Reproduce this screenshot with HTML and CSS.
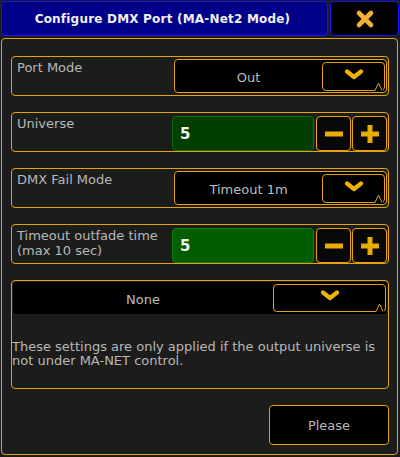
FILE: index.html
```html
<!DOCTYPE html>
<html>
<head>
<meta charset="utf-8">
<link rel="stylesheet" href="styles.css">
</head>
<body>
<div class="header">
  <div class="title">Configure DMX Port (MA-Net2 Mode)</div>
  <div class="close">
    <svg width="20" height="20" viewBox="0 0 20 20"><path d="M4 4 L16 16 M16 4 L4 16" stroke="#f2b230" stroke-width="4.6" stroke-linecap="round"/></svg>
  </div>
</div>
<div class="panel">
  <div class="row">
    <div class="label">Port Mode</div>
    <div class="dropdown">
      <div class="dd-text">Out</div>
      <div class="dd-btn">
        <svg class="chev" width="20" height="11" viewBox="0 0 20 11"><path d="M3 2.5 L10 8 L17 2.5" fill="none" stroke="#f2b200" stroke-width="4.2" stroke-linecap="round" stroke-linejoin="round"/></svg>
        <svg class="notch" width="8" height="9" viewBox="0 0 8 9"><path d="M0 8.5 L3.5 1 L7 8.5" fill="none" stroke="#e6a40a" stroke-width="1"/></svg>
      </div>
    </div>
  </div>
  <div class="row">
    <div class="label">Universe</div>
    <div class="stepper">
      <div class="value dark">5</div>
      <div class="sbtn"><svg width="18" height="18" viewBox="0 0 18 18"><rect x="0" y="6.5" width="18" height="5" fill="#e9ac00"/></svg></div>
      <div class="sbtn"><svg width="18" height="18" viewBox="0 0 18 18"><rect x="0" y="6.5" width="18" height="5" fill="#e9ac00"/><rect x="6.5" y="0" width="5" height="18" fill="#e9ac00"/></svg></div>
    </div>
  </div>
  <div class="row">
    <div class="label">DMX Fail Mode</div>
    <div class="dropdown">
      <div class="dd-text">Timeout 1m</div>
      <div class="dd-btn">
        <svg class="chev" width="20" height="11" viewBox="0 0 20 11"><path d="M3 2.5 L10 8 L17 2.5" fill="none" stroke="#f2b200" stroke-width="4.2" stroke-linecap="round" stroke-linejoin="round"/></svg>
        <svg class="notch" width="8" height="9" viewBox="0 0 8 9"><path d="M0 8.5 L3.5 1 L7 8.5" fill="none" stroke="#e6a40a" stroke-width="1"/></svg>
      </div>
    </div>
  </div>
  <div class="row">
    <div class="label">Timeout outfade time<br>(max 10 sec)</div>
    <div class="stepper">
      <div class="value bright">5</div>
      <div class="sbtn"><svg width="18" height="18" viewBox="0 0 18 18"><rect x="0" y="6.5" width="18" height="5" fill="#e9ac00"/></svg></div>
      <div class="sbtn"><svg width="18" height="18" viewBox="0 0 18 18"><rect x="0" y="6.5" width="18" height="5" fill="#e9ac00"/><rect x="6.5" y="0" width="5" height="18" fill="#e9ac00"/></svg></div>
    </div>
  </div>
  <div class="box">
    <div class="wide-dd">
      <div class="dd-text">None</div>
      <div class="dd-btn wide-btn">
        <svg class="chev" width="20" height="11" viewBox="0 0 20 11"><path d="M3 2.5 L10 8 L17 2.5" fill="none" stroke="#f2b200" stroke-width="4.2" stroke-linecap="round" stroke-linejoin="round"/></svg>
        <svg class="notch" width="8" height="9" viewBox="0 0 8 9"><path d="M0 8.5 L3.5 1 L7 8.5" fill="none" stroke="#e6a40a" stroke-width="1"/></svg>
      </div>
    </div>
    <div class="note">These settings are only applied if the output universe is not under MA-NET control.</div>
  </div>
  <div class="footer">
    <div class="please">Please</div>
  </div>
</div>
</body>
</html>
```

FILE: styles.css
```css
* { box-sizing: border-box; }
html, body { margin: 0; padding: 0; }
body {
  width: 400px;
  height: 457px;
  background: #1c1c1c;
  font-family: "DejaVu Sans", sans-serif;
  font-size: 13px;
  color: #b4b4b4;
  overflow: hidden;
}
.header {
  display: flex;
  gap: 2px;
  padding: 1px 1px 0 1px;
  height: 36px;
}
.title {
  width: 327px;
  height: 35px;
  background: #000088;
  border: 1px solid #1414f0;
  border-radius: 4px;
  color: #f0f0f0;
  font-weight: bold;
  font-size: 12px;
  letter-spacing: 0.2px;
  display: flex;
  align-items: center;
  justify-content: center;
  padding-right: 4px;
}
.close {
  flex: 1;
  height: 35px;
  background: #000;
  border: 1px solid #1414f0;
  border-radius: 4px;
  display: flex;
  align-items: center;
  justify-content: center;
}
.panel {
  margin: 2px 0 0 1px;
  width: 397px;
  height: 417px;
  border: 1px solid #e6a40a;
  border-radius: 4px;
  background: #1c1c1c;
  padding: 17px 8px 0 9px;
  display: flex;
  flex-direction: column;
  gap: 16px;
}
.row {
  height: 40px;
  border: 1px solid #e6a40a;
  border-radius: 4px;
  display: flex;
  justify-content: space-between;
  padding: 2px 1px 2px 5px;
}
.label {
  line-height: 15px;
  padding-top: 1px;
  color: #b8b8b8;
}
.dropdown {
  width: 213px;
  height: 34px;
  background: #000;
  border: 1px solid #e6a40a;
  border-radius: 4px;
  display: flex;
  padding: 2px 1px 1px 0;
}
.dd-text {
  flex: 1;
  display: flex;
  align-items: center;
  justify-content: center;
  color: #bcbcbc;
  padding-top: 1px;
}
.dd-btn {
  position: relative;
  width: 63px;
  height: 29px;
  border: 1px solid #e6a40a;
  border-radius: 4px;
  display: flex;
  justify-content: center;
  padding-top: 6px;
}
.chev { display: block; }
.notch {
  position: absolute;
  right: 1px;
  bottom: -1px;
  background: #000;
}
.stepper {
  display: flex;
  gap: 1px;
  height: 35px;
  margin-top: 1px;
}
.value {
  width: 142px;
  border-radius: 4px;
  color: #f4f4f4;
  font-weight: bold;
  font-size: 15px;
  display: flex;
  align-items: center;
  padding-left: 7px;
  margin-right: 1px;
}
.value.dark { background: #003f00; border: 1px solid #0a700a; }
.value.bright { background: #005e00; border: 1px solid #0c800c; }
.sbtn {
  width: 35px;
  background: #080808;
  border: 1px solid #e6a40a;
  border-radius: 4px;
  display: flex;
  align-items: center;
  justify-content: center;
}
.box {
  height: 109px;
  border: 1px solid #e6a40a;
  border-radius: 4px;
  padding: 1px 1px 0 1px;
}
.wide-dd {
  height: 32px;
  background: #000;
  border-radius: 3px;
  display: flex;
  padding: 2px 1px 1px 0;
}
.wide-btn {
  width: 113px;
  height: 28px;
  padding-top: 5px;
}
.note {
  margin-top: 26px;
  margin-left: -1px;
  line-height: 14px;
  color: #b8b8b8;
  font-size: 13px;
}
.footer {
  display: flex;
  justify-content: flex-end;
}
.please {
  width: 120px;
  height: 40px;
  background: #000;
  border: 1px solid #e6a40a;
  border-radius: 4px;
  display: flex;
  align-items: center;
  justify-content: center;
  color: #b8b8b8;
}
```
